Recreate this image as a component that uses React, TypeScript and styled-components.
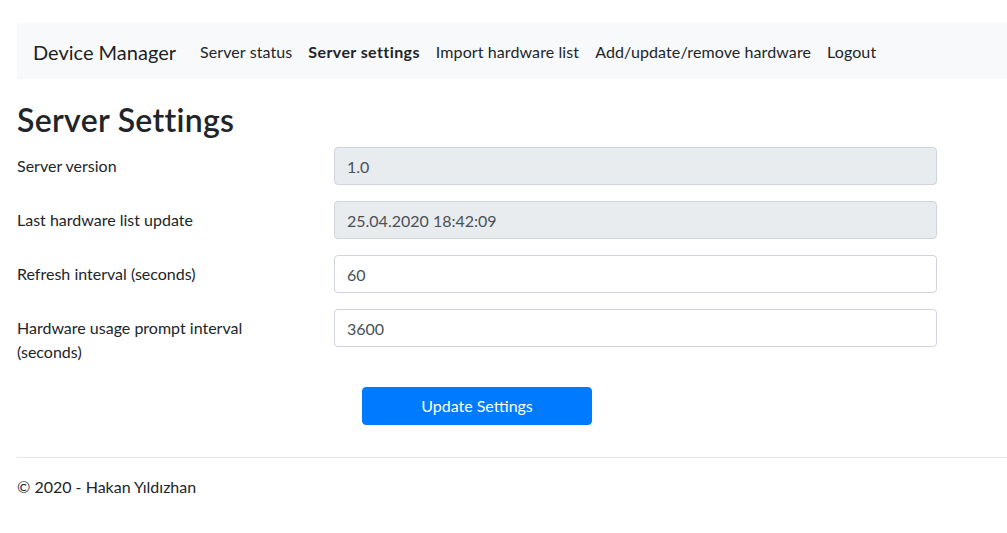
import styled, { createGlobalStyle } from "styled-components";

const GlobalStyle = createGlobalStyle`
  html, body {
    margin: 0;
    padding: 0;
    background: #fff;
  }
  body {
    font-family: Lato, "Open Sans", "Liberation Sans", sans-serif;
    font-size: 16px;
    line-height: 1.5;
    color: #212529;
    overflow-x: hidden;
  }
  *, *::before, *::after {
    box-sizing: border-box;
  }
`;

const Page = styled.div`
  padding: 23px 0 0 17px;
`;

const Navbar = styled.nav`
  display: flex;
  align-items: center;
  height: 56px;
  padding: 9px 16px 7px;
  background: #f8f9fa;
  margin-bottom: 16px;
`;

const Brand = styled.a`
  font-size: 20px;
  color: rgba(0, 0, 0, 0.9);
  margin-right: 16px;
  text-decoration: none;
  white-space: nowrap;
`;

const NavList = styled.ul`
  display: flex;
  list-style: none;
  margin: 0;
  padding: 0;
`;

const NavLink = styled.a<{ $active?: boolean }>`
  display: block;
  padding: 8px;
  color: #212529;
  font-weight: ${(p) => (p.$active ? 700 : 400)};
  letter-spacing: ${(p) => (p.$active ? "0.4px" : "0.1px")};
  text-decoration: none;
  white-space: nowrap;
`;

const Heading = styled.h1`
  font-size: 32px;
  font-weight: 600;
  line-height: 1.2;
  letter-spacing: 0.3px;
  margin: 0 0 8px;
  padding-top: 6px;
`;

const Form = styled.form`
  width: 920px;
`;

const FormRow = styled.div`
  display: grid;
  grid-template-columns: 287px 603px;
  column-gap: 30px;
  margin-bottom: 16px;
`;

const Label = styled.label`
  padding: 7px 0;
  line-height: 1.5;
`;

const Input = styled.input<{ $readOnly?: boolean }>`
  display: block;
  width: 100%;
  height: 38px;
  padding: 6px 12px;
  font: inherit;
  color: #495057;
  background: ${(p) => (p.$readOnly ? "#e9ecef" : "#fff")};
  border: 1px solid #ced4da;
  border-radius: 4px;
  outline: none;
`;

const ButtonRow = styled.div`
  display: flex;
  justify-content: center;
  width: 920px;
`;

const Button = styled.button`
  width: 230px;
  height: 38px;
  font: inherit;
  color: #fff;
  background: #007bff;
  border: 1px solid #007bff;
  border-radius: 4px;
  cursor: pointer;
`;

const Rule = styled.hr`
  border: 0;
  border-top: 1px solid rgba(0, 0, 0, 0.1);
  margin: 32px 0 0;
`;

const Footer = styled.footer`
  padding-top: 17px;
  line-height: 24px;
`;

const fields = [
  { label: "Server version", value: "1.0", readOnly: true },
  { label: "Last hardware list update", value: "25.04.2020 18:42:09", readOnly: true },
  { label: "Refresh interval (seconds)", value: "60", readOnly: false },
  { label: "Hardware usage prompt interval (seconds)", value: "3600", readOnly: false },
];

export default function App() {
  return (
    <>
      <GlobalStyle />
      <Page>
        <Navbar>
          <Brand href="#">Device Manager</Brand>
          <NavList>
            <li><NavLink href="#">Server status</NavLink></li>
            <li><NavLink href="#" $active>Server settings</NavLink></li>
            <li><NavLink href="#">Import hardware list</NavLink></li>
            <li><NavLink href="#">Add/update/remove hardware</NavLink></li>
            <li><NavLink href="#">Logout</NavLink></li>
          </NavList>
        </Navbar>
        <Heading>Server Settings</Heading>
        <Form onSubmit={(e) => e.preventDefault()}>
          {fields.map((f) => (
            <FormRow key={f.label}>
              <Label>{f.label}</Label>
              <Input defaultValue={f.value} readOnly={f.readOnly} $readOnly={f.readOnly} />
            </FormRow>
          ))}
          <ButtonRow>
            <Button type="submit">Update Settings</Button>
          </ButtonRow>
        </Form>
        <Rule />
        <Footer>© 2020 - Hakan Yıldızhan</Footer>
      </Page>
    </>
  );
}
